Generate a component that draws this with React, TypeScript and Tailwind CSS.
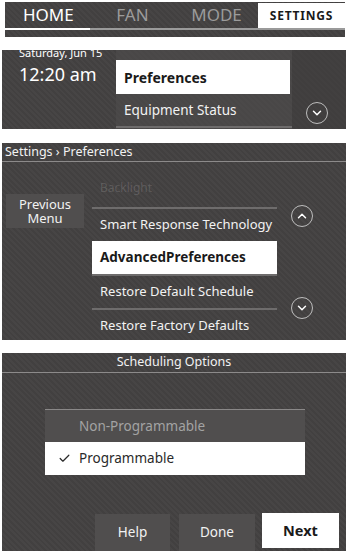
import { ChevronDown, ChevronUp, Check } from "lucide-react";

const font = { fontFamily: '"Noto Sans", "Open Sans", sans-serif' };

function CircleChevron({ up }: { up?: boolean }) {
  return (
    <div className="w-[22px] h-[22px] rounded-full border border-[#bdbdbd] flex items-center justify-center">
      {up ? (
        <ChevronUp className="w-[14px] h-[14px] text-white" strokeWidth={2.5} />
      ) : (
        <ChevronDown className="w-[14px] h-[14px] text-white" strokeWidth={2.5} />
      )}
    </div>
  );
}

function ListRow({ label }: { label: string }) {
  return (
    <div className="h-[34px] flex items-center pl-[8px] border-t-2 border-[#6e6c6c] text-[13px] text-[#f2f2f2] whitespace-nowrap">
      {label}
    </div>
  );
}

export default function App() {
  return (
    <div className="w-[348px] h-[551px] bg-white flex flex-col overflow-hidden" style={font}>
      {/* Top nav */}
      <div className="ml-[5px] mr-[3px] mt-[2px] h-[35px] flex flex-col bg-[repeating-linear-gradient(45deg,#474545_0px,#474545_2px,#424040_2px,#424040_4px)]">
        <div className="flex h-[26px]">
          <div className="w-[85px] flex items-center pl-[18px] text-[17px] text-white">HOME</div>
          <div className="w-[85px] flex items-center justify-center text-[17px] text-[#9b9b9b]">FAN</div>
          <div className="w-[83px] flex items-center justify-center text-[17px] text-[#9b9b9b]">MODE</div>
          <div className="flex-1 mt-[1px] bg-white flex items-center justify-center text-[12px] font-bold tracking-[0.8px] text-[#1a1a1a]">
            SETTINGS
          </div>
        </div>
        <div className="flex h-[2px]">
          <div className="w-[85px] bg-white" />
          <div className="flex-1 bg-[#9a9a9a]" />
        </div>
      </div>

      {/* Home status / settings menu */}
      <div className="mx-[2px] mt-[13px] h-[79px] grid grid-cols-[114px_176px_1fr] bg-[repeating-linear-gradient(45deg,#474545_0px,#474545_2px,#424040_2px,#424040_4px)] overflow-hidden">
        <div className="flex flex-col pl-[17px]">
          <div className="-mt-[4px] text-[11px] leading-[14px] text-white">Saturday, Jun 15</div>
          <div className="mt-[3px] text-[18px] leading-[22px] text-white">12:20 am</div>
        </div>
        <div className="flex flex-col pt-[10px] bg-[#4f4d4d]/60">
          <div className="h-[34px] mr-[2px] bg-white flex items-center pl-[8px] text-[14px] font-bold text-[#1a1a1a]">
            Preferences
          </div>
          <div className="h-[34px] flex items-center pl-[8px] border-b-2 border-[#6e6c6c] text-[13.5px] text-[#f2f2f2]">
            Equipment Status
          </div>
        </div>
        <div className="flex flex-col items-center justify-end pb-[5px] pr-[4px] bg-[#3e3c3c]/50">
          <CircleChevron />
        </div>
      </div>

      {/* Preferences list */}
      <div className="mx-[2px] mt-[14px] h-[197px] flex flex-col bg-[repeating-linear-gradient(45deg,#474545_0px,#474545_2px,#424040_2px,#424040_4px)]">
        <div className="h-[19px] border-b border-[#8c8a8a] flex items-center pl-[3px] text-[12.5px] text-[#f2f2f2]">
          Settings › Preferences
        </div>
        <div className="flex-1 grid grid-cols-[90px_185px_1fr] overflow-hidden">
          <div className="pl-[4px] pt-[32px]">
            <div className="w-[78px] h-[34px] bg-[#504e4e] flex flex-col items-center justify-center text-[13px] leading-[14px] text-[#f2f2f2]">
              <span>Previous</span>
              <span>Menu</span>
            </div>
          </div>
          <div className="flex flex-col">
            <div className="h-[45px] flex items-end pl-[8px] pb-[10px] text-[12px] text-white/15">Backlight</div>
            <ListRow label="Smart Response Technology" />
            <div className="h-[33px] bg-white flex items-center pl-[8px] text-[13.5px] font-bold text-[#1a1a1a] whitespace-nowrap">
              AdvancedPreferences
            </div>
            <ListRow label="Restore Default Schedule" />
            <ListRow label="Restore Factory Defaults" />
          </div>
          <div className="flex flex-col items-center pt-[43px] pr-[20px] gap-[70px]">
            <CircleChevron up />
            <CircleChevron />
          </div>
        </div>
      </div>

      {/* Scheduling options */}
      <div className="mx-[2px] mt-[13px] flex-1 flex flex-col bg-[repeating-linear-gradient(45deg,#474545_0px,#474545_2px,#424040_2px,#424040_4px)]">
        <div className="h-[20px] border-b border-[#8c8a8a] flex items-center justify-center text-[12.5px] text-[#f2f2f2]">
          Scheduling Options
        </div>
        <div className="pl-[43px] pt-[36px]">
          <div className="w-[260px] flex flex-col">
            <div className="h-[33px] border-t border-[#8a8888] bg-[#504e4e] flex items-center pl-[34px] text-[13.5px] text-[#a3a3a3]">
              Non-Programmable
            </div>
            <div className="h-[33px] bg-white flex items-center pl-[13px] text-[13.5px] text-[#2a2a2a]">
              <Check className="w-[13px] h-[13px] mr-[8px] text-[#2a2a2a]" strokeWidth={2.25} />
              Programmable
            </div>
          </div>
        </div>
        <div className="mt-auto flex items-end pl-[93px] gap-[9px]">
          <div className="w-[75px] h-[37px] bg-[#504e4e] flex items-center justify-center text-[13.5px] text-[#f2f2f2]">Help</div>
          <div className="w-[76px] h-[37px] bg-[#504e4e] flex items-center justify-center text-[13.5px] text-[#f2f2f2]">Done</div>
          <div className="w-[77px] h-[35px] mb-[3px] -ml-[2px] bg-white flex items-center justify-center text-[14.5px] font-bold text-[#1a1a1a]">Next</div>
        </div>
      </div>
    </div>
  );
}
